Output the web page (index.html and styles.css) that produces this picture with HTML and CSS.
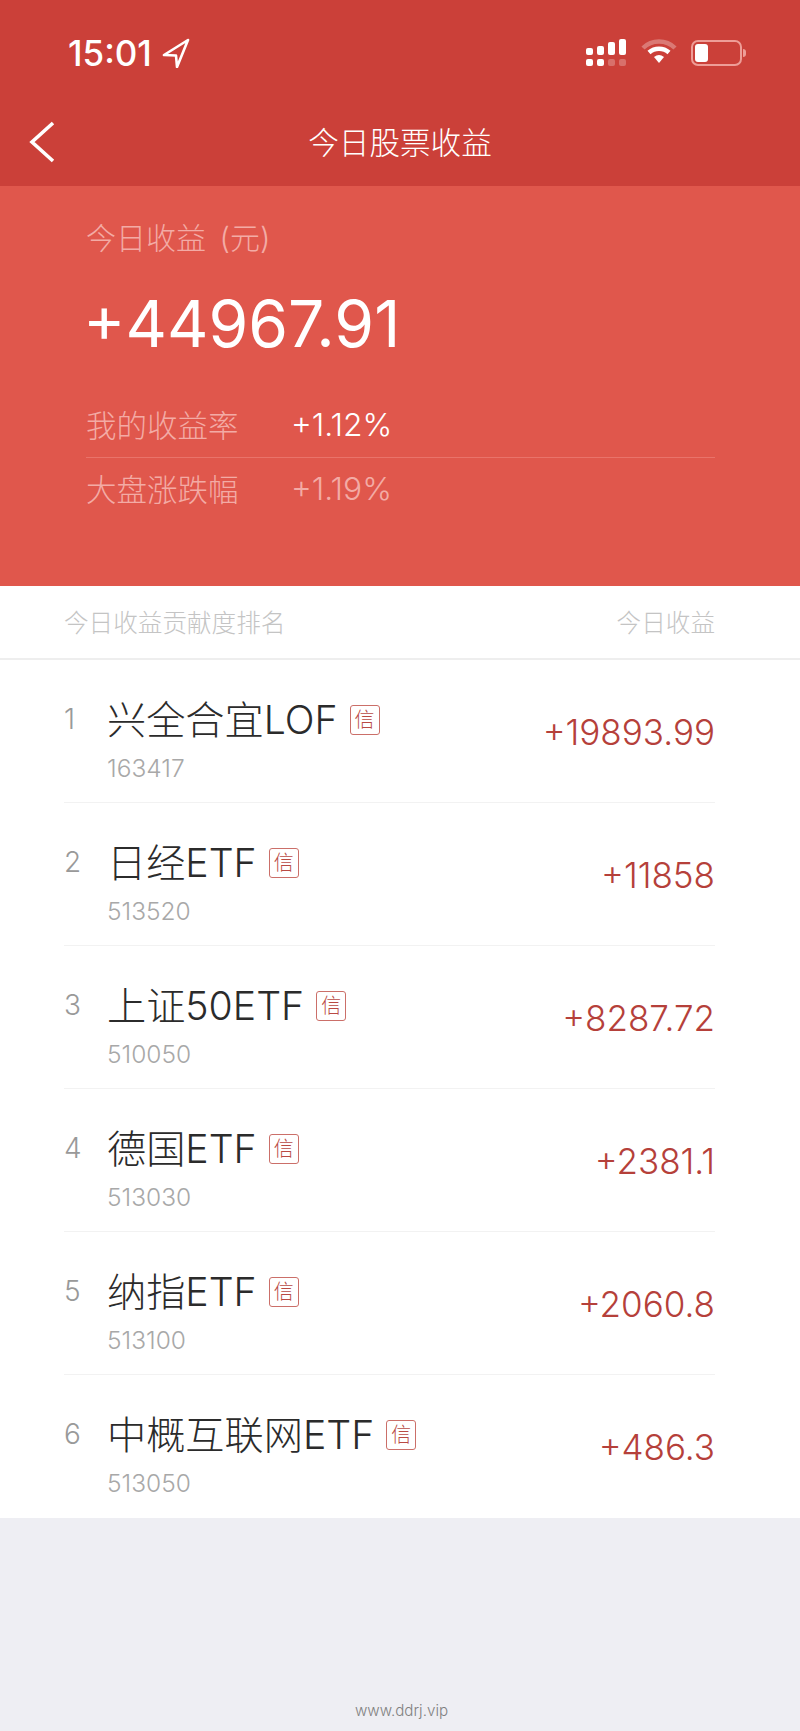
FILE: index.html
```html
<!DOCTYPE html>
<html>
<head>
    <title>今日股票收益</title>
    <meta charset="utf-8">
    <link rel="stylesheet" href="styles.css">
</head>
<body>

<!-- Status bar and nav -->
<header class="top">
    <div class="status">
        <div class="status-left">
            <span class="time">15:01</span>
            <svg class="arrow" width="28" height="30" viewBox="0 0 28 30">
                <path d="M26 2 L2 17 L14 17.5 L15 29 Z" fill="none" stroke="#fff" stroke-width="2.6" stroke-linejoin="round"/>
            </svg>
        </div>
        <div class="status-right">
            <svg width="41" height="29" viewBox="0 0 41 29">
                <g fill="#fff">
                    <rect x="0" y="9" width="7" height="7" rx="2"/>
                    <rect x="11" y="7" width="7" height="9" rx="2"/>
                    <rect x="22" y="3" width="7" height="13" rx="2"/>
                    <rect x="33" y="0" width="7" height="16" rx="2"/>
                    <rect x="0" y="20" width="7" height="7" rx="2"/>
                    <rect x="11" y="20" width="7" height="7" rx="2"/>
                </g>
                <g fill="#fff" opacity="0.25">
                    <rect x="22" y="20" width="7" height="7" rx="2"/>
                    <rect x="33" y="20" width="7" height="7" rx="2"/>
                </g>
            </svg>
            <svg width="36" height="26" viewBox="0 0 36 26">
                <path d="M2 9 A23 23 0 0 1 34 9" fill="none" stroke="#fff" stroke-opacity="0.3" stroke-width="4.5"/>
                <path d="M8 13.5 A15 15 0 0 1 28 13.5" fill="none" stroke="#fff" stroke-width="4.5"/>
                <path d="M13 18 Q18 14 23 18 L18 24 Z" fill="#fff"/>
            </svg>
            <div class="battery">
                <div class="battery-fill"></div>
            </div>
            <div class="battery-nub"></div>
        </div>
    </div>
    <div class="nav">
        <svg class="back" width="28" height="44" viewBox="0 0 28 44">
            <path d="M25 3 L4 22 L25 41" fill="none" stroke="#fff" stroke-width="3.6"/>
        </svg>
        <span class="nav-title">今日股票收益</span>
    </div>
</header>

<!-- Summary -->
<section class="summary">
    <div class="summary-label">今日收益 (元)</div>
    <div class="summary-value">+44967.91</div>
    <div class="rate-row rate-first">
        <span class="rate-name">我的收益率</span>
        <span class="rate-value">+1.12%</span>
    </div>
    <div class="rate-row rate-second">
        <span class="rate-name">大盘涨跌幅</span>
        <span class="rate-value rate-dim">+1.19%</span>
    </div>
</section>

<!-- Ranking -->
<div class="list-head">
    <span>今日收益贡献度排名</span>
    <span>今日收益</span>
</div>

<ul class="list">
    <li class="row">
        <span class="rank">1</span>
        <div class="info">
            <div class="name">兴全合宜LOF<span class="tag">信</span></div>
            <div class="code">163417</div>
        </div>
        <span class="amount">+19893.99</span>
    </li>
    <li class="row">
        <span class="rank">2</span>
        <div class="info">
            <div class="name">日经ETF<span class="tag">信</span></div>
            <div class="code">513520</div>
        </div>
        <span class="amount">+11858</span>
    </li>
    <li class="row">
        <span class="rank">3</span>
        <div class="info">
            <div class="name">上证50ETF<span class="tag">信</span></div>
            <div class="code">510050</div>
        </div>
        <span class="amount">+8287.72</span>
    </li>
    <li class="row">
        <span class="rank">4</span>
        <div class="info">
            <div class="name">德国ETF<span class="tag">信</span></div>
            <div class="code">513030</div>
        </div>
        <span class="amount">+2381.1</span>
    </li>
    <li class="row">
        <span class="rank">5</span>
        <div class="info">
            <div class="name">纳指ETF<span class="tag">信</span></div>
            <div class="code">513100</div>
        </div>
        <span class="amount">+2060.8</span>
    </li>
    <li class="row">
        <span class="rank">6</span>
        <div class="info">
            <div class="name">中概互联网ETF<span class="tag">信</span></div>
            <div class="code">513050</div>
        </div>
        <span class="amount">+486.3</span>
    </li>
</ul>

<footer class="footer">www.ddrj.vip</footer>

</body>
</html>
```

FILE: styles.css
```css
/* Basic styling */
body {
    font-family: Inter, "Noto Sans CJK SC", sans-serif;
    font-weight: 300;
    margin: 0;
    background-color: #eeeef3;
}

/* Top bar */
.top {
    height: 186px;
    background-color: #cb4039;
    color: #fff;
}
.status {
    height: 100px;
    display: flex;
    justify-content: space-between;
    padding: 35px 54px 0 68px;
    box-sizing: border-box;
}
.status-left {
    display: flex;
    align-items: flex-start;
    gap: 10px;
}
.time {
    font-size: 35px;
    font-weight: 500;
    line-height: 36px;
}
.arrow {
    margin-top: 3px;
}
.status-right {
    display: flex;
    align-items: flex-start;
    padding-top: 4px;
}
.status-right svg {
    margin-right: 14px;
}
.battery {
    width: 51px;
    height: 26px;
    margin-top: 1px;
    padding: 2px;
    box-sizing: border-box;
    border: 2px solid #ee9d97;
    border-radius: 7px;
}
.battery-fill {
    width: 13px;
    height: 18px;
    background-color: #fff;
    border-radius: 3px;
}
.battery-nub {
    width: 3px;
    height: 8px;
    margin: 10px 0 0 1px;
    background-color: #ee9d97;
    border-radius: 0 3px 3px 0;
}
.nav {
    height: 86px;
    display: flex;
    align-items: center;
    justify-content: center;
    position: relative;
}
.back {
    position: absolute;
    left: 28px;
    top: 20px;
}
.nav-title {
    font-size: 30.6px;
    line-height: 44px;
}

/* Summary */
.summary {
    height: 400px;
    box-sizing: border-box;
    padding: 30px 85px 0 86px;
    background-color: #e0574c;
}
.summary-label {
    font-size: 30px;
    line-height: 44px;
    word-spacing: 5px;
    color: #f3aba5;
}
.summary-value {
    font-size: 64.2px;
    font-weight: 400;
    line-height: 76px;
    margin: 26px 0 0 -3px;
    color: #fff;
}
.rate-row {
    display: flex;
    align-items: center;
}
.rate-first {
    height: 62px;
    padding-bottom: 2px;
    margin-top: 31px;
    border-bottom: 1px solid #e9736a;
}
.rate-second {
    height: 60px;
}
.rate-name {
    width: 205px;
    font-size: 30.5px;
    color: #f3aba5;
}
.rate-value {
    font-size: 31.8px;
    color: #fff;
}
.rate-dim {
    color: #f3aba5;
}

/* Ranking list */
.list-head {
    height: 74px;
    box-sizing: border-box;
    display: flex;
    justify-content: space-between;
    align-items: center;
    padding: 0 85px 2px 64px;
    background-color: #fff;
    border-bottom: 2px solid #eeeeee;
    font-size: 24.6px;
    color: #c4c4c4;
}
.list {
    list-style: none;
    margin: 0;
    padding: 0 85px 0 64px;
    background-color: #fff;
}
.row {
    height: 143px;
    box-sizing: border-box;
    display: flex;
    border-bottom: 1px solid #f2f2f2;
}
.row:last-child {
    border-bottom: none;
}
.rank {
    width: 43px;
    padding-top: 41px;
    font-size: 28px;
    line-height: 36px;
    color: #999;
}
.info {
    flex: 1;
    padding-top: 34px;
}
.name {
    display: flex;
    align-items: center;
    font-size: 39.2px;
    line-height: 52px;
    color: #2b2b2b;
}
.tag {
    width: 30px;
    height: 30px;
    box-sizing: border-box;
    margin-left: 12px;
    border: 1px solid #cb6f69;
    border-radius: 3px;
    font-size: 20px;
    line-height: 28px;
    text-align: center;
    color: #b94a44;
}
.code {
    margin-top: 8px;
    font-size: 24.5px;
    line-height: 28px;
    color: #a8a8a8;
}
.amount {
    padding-top: 50px;
    font-size: 35px;
    font-weight: 350;
    line-height: 44px;
    color: #b5403a;
}

.footer {
    padding: 182px 0 0 3px;
    font-size: 15.2px;
    line-height: 22px;
    text-align: center;
    color: #808080;
}
```
